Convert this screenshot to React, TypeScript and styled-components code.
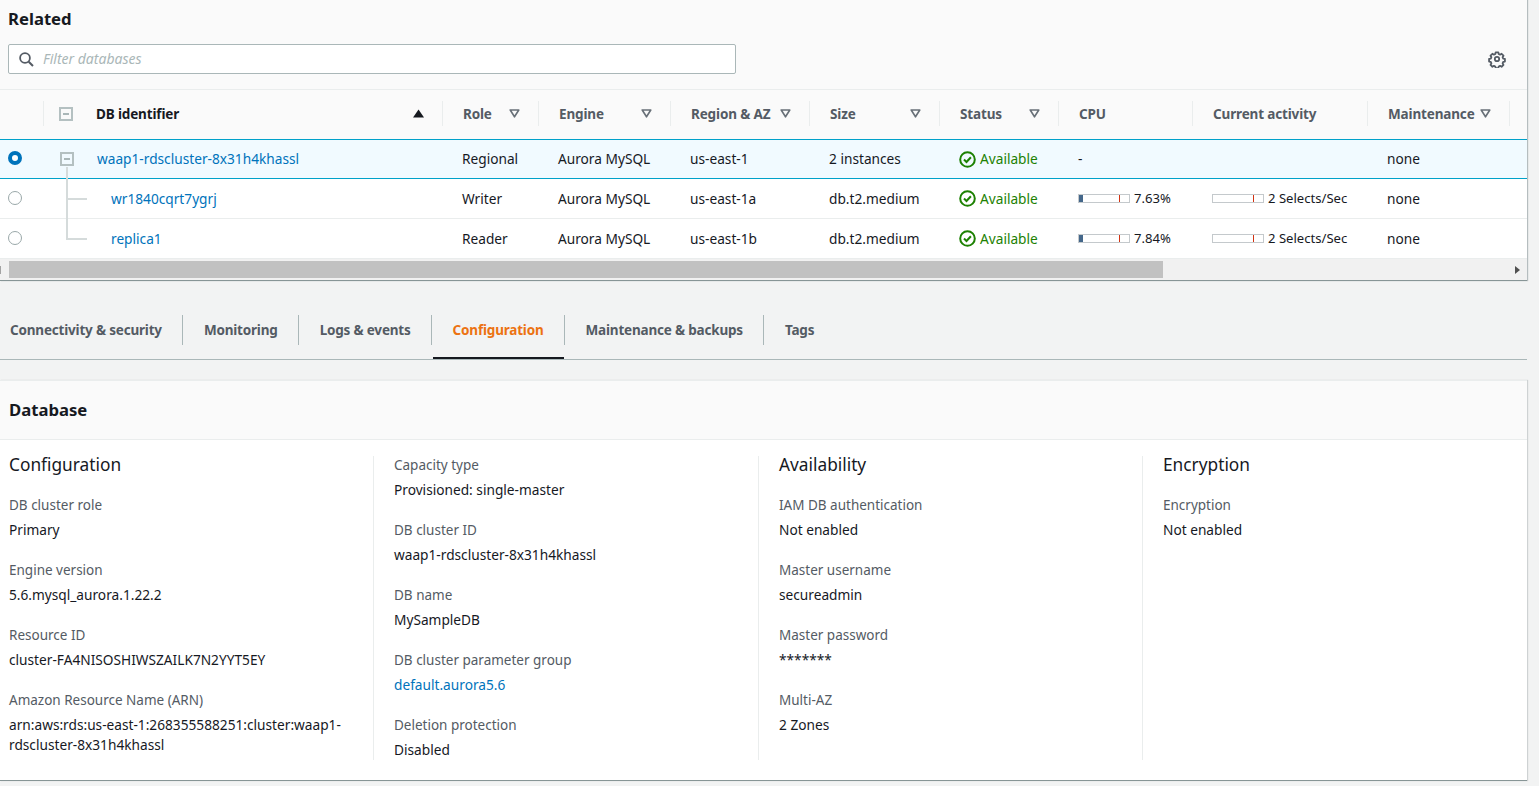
import React from "react";
import styled, { createGlobalStyle } from "styled-components";

const Global = createGlobalStyle`
  html, body { margin: 0; padding: 0; background: #f2f3f3; overflow: hidden; }
  * { box-sizing: border-box; }
  body { font-family: "Noto Sans", "Open Sans", sans-serif; font-size: 13.7px; line-height: 20px; color: #16191f; }
`;

const COLS = "43px 399px 96px 132px 139px 130px 119px 134px 175px 142px 18px";

const Page = styled.div`
  width: 1539px;
  height: 786px;
  overflow: hidden;
  background: #f2f3f3;
`;
const Column = styled.div`
  width: 1527px;
`;
const TopPanel = styled.section`
  background: #fff;
  height: 281px;
  border-bottom: 1px solid #879596;
  box-shadow: 1px 0 1px 0 rgba(0, 28, 36, 0.25);
`;
const PanelHead = styled.div`
  height: 90px;
  background: #fafafa;
  padding: 8px 8px 0;
  border-bottom: 1px solid #eaeded;
`;
const Title = styled.h2`
  margin: 0;
  font-size: 16.7px;
  line-height: 22px;
  font-weight: 700;
  color: #16191f;
`;
const FilterRow = styled.div`
  display: flex;
  align-items: center;
  justify-content: space-between;
  margin-top: 14px;
  padding-right: 13px;
`;
const SearchBox = styled.div`
  width: 728px;
  height: 30px;
  background: #fff;
  border: 1px solid #aab7b8;
  border-radius: 2px;
  display: flex;
  align-items: center;
  padding-left: 10px;
  gap: 9px;
  font-size: 14px;
  color: #aab7b8;
  font-style: italic;
`;
const GridRow = styled.div<{ $h: number; $bg: string }>`
  display: grid;
  grid-template-columns: ${COLS};
  height: ${(p) => p.$h}px;
  background: ${(p) => p.$bg};
  align-items: center;
`;
const HeadRow = styled(GridRow)`
  padding-bottom: 2px;
`;
const HeadCell = styled.div<{ $dark?: boolean; $sep?: boolean }>`
  height: 25px;
  display: flex;
  align-items: center;
  justify-content: space-between;
  padding: 0 18px 0 20px;
  font-weight: 700;
  font-size: 13.5px;
  letter-spacing: -0.15px;
  color: ${(p) => (p.$dark ? "#16191f" : "#545b64")};
  border-left: ${(p) => (p.$sep === false ? "0" : "1px solid #eaeded")};
`;
const IdHead = styled(HeadCell)`
  padding: 0 18px 0 15px;
`;
const IdLabel = styled.span`
  display: flex;
  align-items: center;
  gap: 23px;
`;
const DataRow = styled(GridRow)<{ $selected?: boolean }>`
  border-top: ${(p) => (p.$selected ? "1px solid #00a1c9" : "0")};
  border-bottom: 1px solid ${(p) => (p.$selected ? "#00a1c9" : "#eaeded")};
`;
const RadioCell = styled.div`
  display: flex;
  justify-content: center;
  padding-right: 13px;
  margin-top: -2px;
`;
const Radio = styled.span<{ $on?: boolean }>`
  width: 14px;
  height: 14px;
  border-radius: 50%;
  background: #fff;
  border: ${(p) => (p.$on ? "4px solid #0073bb" : "1px solid #9aa8a9")};
`;
const IdCell = styled.div<{ $child?: boolean }>`
  position: relative;
  display: flex;
  align-items: center;
  height: 100%;
  padding-left: ${(p) => (p.$child ? "68px" : "17px")};
`;
const Expand = styled.span<{ $row?: boolean }>`
  width: 14px;
  height: 14px;
  border: 2px solid #b4c0c1;
  display: flex;
  align-items: center;
  justify-content: center;
  margin-right: ${(p) => (p.$row ? "23px" : "0")};
  background: transparent;
  &::after {
    content: "";
    width: 6px;
    height: 2px;
    background: #aab7b8;
  }
`;
const TreeV = styled.span<{ $h: number; $top: number }>`
  position: absolute;
  left: 23px;
  top: ${(p) => p.$top}px;
  width: 2px;
  height: ${(p) => p.$h}px;
  background: #d5dbdb;
`;
const TreeH = styled.span`
  position: absolute;
  left: 23px;
  top: 19px;
  width: 21px;
  height: 2px;
  background: #d5dbdb;
`;
const Link = styled.a`
  color: #0073bb;
  text-decoration: none;
`;
const Cell = styled.div`
  padding-left: 20px;
  display: flex;
  align-items: center;
  white-space: nowrap;
  color: #16191f;
`;
const Available = styled.span`
  display: flex;
  align-items: center;
  gap: 4px;
  color: #1d8102;
`;
const Meter = styled.span`
  display: flex;
  align-items: center;
  gap: 4px;
  font-size: 13.1px;
  margin-top: -1px;
`;
const MeterBar = styled.span`
  position: relative;
  display: block;
  width: 52px;
  height: 9px;
  border: 1px solid #c4c9cc;
  background: #fff;
`;
const MeterFill = styled.span`
  display: block;
  height: 100%;
  background: #44678a;
`;
const MeterTick = styled.span`
  position: absolute;
  right: 9px;
  top: 0;
  bottom: 0;
  width: 1px;
  background: #d13212;
`;
const Scrollbar = styled.div`
  height: 21px;
  background: #f1f1f1;
  display: flex;
  align-items: center;
  padding: 0 7px 0 0;
`;
const ScrollEnd = styled.span`
  width: 0;
  height: 0;
  border-top: 4px solid transparent;
  border-bottom: 4px solid transparent;
  border-left: 5px solid #505050;
  margin-left: auto;
`;
const ScrollStart = styled.span`
  width: 1px;
  height: 8px;
  background: #a3a3a3;
  margin-right: 8px;
`;
const ScrollThumb = styled.span`
  width: 1154px;
  height: 17px;
  background: #c1c1c1;
`;
const Tabs = styled.nav`
  margin-top: 34px;
  height: 45px;
  border-bottom: 1px solid #aab7b8;
  display: flex;
  align-items: flex-start;
`;
const Tab = styled.div<{ $active?: boolean; $first?: boolean; $last?: boolean }>`
  position: relative;
  height: 30px;
  display: flex;
  align-items: center;
  padding: 0 20px 0 ${(p) => (p.$first ? "10px" : "21px")};
  font-weight: 700;
  font-size: 13.5px;
  letter-spacing: -0.19px;
  color: ${(p) => (p.$active ? "#ec7211" : "#545b64")};
  border-right: ${(p) => (p.$last ? "0" : "1px solid #aab7b8")};
  &::after {
    content: "";
    display: ${(p) => (p.$active ? "block" : "none")};
    position: absolute;
    left: 1px;
    right: 0;
    top: 42px;
    height: 2px;
    background: #16191f;
  }
`;
const Card = styled.section`
  margin-top: 20px;
  height: 401px;
  background: #fff;
  border-bottom: 1px solid #879596;
  box-shadow: 1px 0 1px 0 rgba(0, 28, 36, 0.15);
`;
const CardHead = styled.div`
  height: 60px;
  background: #fafafa;
  border-bottom: 1px solid #eaeded;
  padding: 18px 9px 0;
  border-top: 1px solid #eaeded;
`;
const CardBody = styled.div`
  display: grid;
  grid-template-columns: 374px 385px 384px 384px;
  padding-top: 16px;
`;
const DetailCol = styled.div<{ $first?: boolean; $last?: boolean }>`
  height: 304px;
  padding-top: 0;
  padding-left: ${(p) => (p.$first ? "9px" : "20px")};
  padding-right: 10px;
  border-right: ${(p) => (p.$last ? "0" : "1px solid #eaeded")};
`;
const ColStack = styled.div`
  margin-top: -1px;
`;
const ColTitle = styled.h3`
  margin: 0 0 20px;
  font-size: 17.3px;
  line-height: 20px;
  font-weight: 400;
  color: #16191f;
`;
const Field = styled.div`
  margin-bottom: 20px;
`;
const Label = styled.div`
  font-size: 13.5px;
  color: #545b64;
  line-height: 20px;
  margin-bottom: 5px;
`;
const Value = styled.div`
  line-height: 20px;
`;

const Caret = () => (
  <svg width="11" height="9" viewBox="0 0 11 9" aria-hidden="true">
    <path d="M1.2 1h8.6L5.5 7.8z" fill="none" stroke="#687078" strokeWidth="1.6" strokeLinejoin="round" />
  </svg>
);
const SortUp = () => (
  <svg width="11" height="9" viewBox="0 0 11 9" aria-hidden="true">
    <path d="M5.5 0.5L11 8.5H0z" fill="#16191f" />
  </svg>
);
const SearchIcon = () => (
  <svg width="15" height="15" viewBox="0 0 15 15" fill="none" aria-hidden="true">
    <circle cx="6" cy="6" r="4.9" stroke="#545b64" strokeWidth="1.8" />
    <path d="M9.7 9.7L14 14" stroke="#545b64" strokeWidth="2" />
  </svg>
);
const Gear = () => (
  <svg width="18" height="18" viewBox="0 0 18 18" fill="none" aria-hidden="true">
    <path
      d="M7.5 1.6h3l.4 1.9 1.5.7 1.7-1 2.1 2.1-1 1.7.7 1.5 1.9.4v3l-1.9.4-.7 1.5 1 1.7-2.1 2.1-1.7-1-1.5.7-.4 1.9h-3l-.4-1.9-1.5-.7-1.7 1-2.1-2.1 1-1.7-.7-1.5-1.9-.4v-3l1.9-.4.7-1.5-1-1.7 2.1-2.1 1.7 1 1.5-.7z"
      transform="translate(0.9 0.9) scale(0.9)"
      stroke="#545b64"
      strokeWidth="2"
      strokeLinejoin="round"
    />
    <circle cx="9" cy="9" r="2.2" stroke="#545b64" strokeWidth="1.8" />
  </svg>
);
const CheckCircle = () => (
  <svg width="17" height="17" viewBox="0 0 17 17" fill="none" aria-hidden="true">
    <circle cx="8.5" cy="8.5" r="7.3" stroke="#1d8102" strokeWidth="2" />
    <path d="M5 8.5l2.5 2.5 4.4-4.8" stroke="#1d8102" strokeWidth="2" />
  </svg>
);

const Usage = ({ fill, text }: { fill: number; text: string }) => (
  <Meter>
    <MeterBar>
      <MeterFill style={{ width: `${fill}%` }} />
      <MeterTick />
    </MeterBar>
    {text}
  </Meter>
);

const headers: [string, boolean][] = [
  ["Role", true],
  ["Engine", true],
  ["Region & AZ", true],
  ["Size", true],
  ["Status", true],
  ["CPU", false],
  ["Current activity", false],
  ["Maintenance", true],
];

type RowData = {
  id: string;
  role: string;
  region: string;
  size: string;
  cpu?: string;
  selected?: boolean;
  tree?: "first" | "last";
};
const rows: RowData[] = [
  { id: "waap1-rdscluster-8x31h4khassl", role: "Regional", region: "us-east-1", size: "2 instances", selected: true },
  { id: "wr1840cqrt7ygrj", role: "Writer", region: "us-east-1a", size: "db.t2.medium", cpu: "7.63%", tree: "first" },
  { id: "replica1", role: "Reader", region: "us-east-1b", size: "db.t2.medium", cpu: "7.84%", tree: "last" },
];

const tabs = ["Connectivity & security", "Monitoring", "Logs & events", "Configuration", "Maintenance & backups", "Tags"];

type F = { label: string; value: string; link?: boolean };
const details: { title?: string; fields: F[] }[] = [
  {
    title: "Configuration",
    fields: [
      { label: "DB cluster role", value: "Primary" },
      { label: "Engine version", value: "5.6.mysql_aurora.1.22.2" },
      { label: "Resource ID", value: "cluster-FA4NISOSHIWSZAILK7N2YYT5EY" },
      { label: "Amazon Resource Name (ARN)", value: "arn:aws:rds:us-east-1:268355588251:cluster:waap1-rdscluster-8x31h4khassl" },
    ],
  },
  {
    fields: [
      { label: "Capacity type", value: "Provisioned: single-master" },
      { label: "DB cluster ID", value: "waap1-rdscluster-8x31h4khassl" },
      { label: "DB name", value: "MySampleDB" },
      { label: "DB cluster parameter group", value: "default.aurora5.6", link: true },
      { label: "Deletion protection", value: "Disabled" },
    ],
  },
  {
    title: "Availability",
    fields: [
      { label: "IAM DB authentication", value: "Not enabled" },
      { label: "Master username", value: "secureadmin" },
      { label: "Master password", value: "*******" },
      { label: "Multi-AZ", value: "2 Zones" },
    ],
  },
  {
    title: "Encryption",
    fields: [{ label: "Encryption", value: "Not enabled" }],
  },
];

export default function App() {
  return (
    <Page>
      <Global />
      <Column>
        <TopPanel>
          <PanelHead>
            <Title>Related</Title>
            <FilterRow>
              <SearchBox>
                <SearchIcon />
                Filter databases
              </SearchBox>
              <Gear />
            </FilterRow>
          </PanelHead>
          <HeadRow $h={49} $bg="#fafafa">
            <HeadCell $sep={false} />
            <IdHead $dark>
              <IdLabel>
                <Expand />
                DB identifier
              </IdLabel>
              <SortUp />
            </IdHead>
            {headers.map(([h, c]) => (
              <HeadCell key={h}>
                {h}
                {c && <Caret />}
              </HeadCell>
            ))}
            <HeadCell />
          </HeadRow>
          {rows.map((r) => (
            <DataRow key={r.id} $h={40} $bg={r.selected ? "#f1faff" : "#fff"} $selected={r.selected}>
              <RadioCell>
                <Radio $on={r.selected} />
              </RadioCell>
              <IdCell $child={!!r.tree}>
                {r.selected && <Expand $row />}
                {r.selected && <TreeV $top={27} $h={12} />}
                {r.tree && <TreeV $top={0} $h={r.tree === "first" ? 40 : 21} />}
                {r.tree && <TreeH />}
                <Link>{r.id}</Link>
              </IdCell>
              <Cell>{r.role}</Cell>
              <Cell>Aurora MySQL</Cell>
              <Cell>{r.region}</Cell>
              <Cell>{r.size}</Cell>
              <Cell>
                <Available>
                  <CheckCircle />
                  Available
                </Available>
              </Cell>
              <Cell>{r.cpu ? <Usage fill={8} text={r.cpu} /> : "-"}</Cell>
              <Cell>{r.cpu ? <Usage fill={0} text="2 Selects/Sec" /> : null}</Cell>
              <Cell>none</Cell>
              <Cell />
            </DataRow>
          ))}
          <Scrollbar>
            <ScrollStart />
            <ScrollThumb />
            <ScrollEnd />
          </Scrollbar>
        </TopPanel>
        <Tabs>
          {tabs.map((t, i) => (
            <Tab key={t} $first={i === 0} $last={i === tabs.length - 1} $active={t === "Configuration"}>
              {t}
            </Tab>
          ))}
        </Tabs>
        <Card>
          <CardHead>
            <Title>Database</Title>
          </CardHead>
          <CardBody>
            {details.map((c, i) => (
              <DetailCol key={i} $first={i === 0} $last={i === details.length - 1}>
                <ColStack>
                  {c.title && <ColTitle>{c.title}</ColTitle>}
                  {c.fields.map((f) => (
                    <Field key={f.label}>
                      <Label>{f.label}</Label>
                      <Value>{f.link ? <Link>{f.value}</Link> : f.value}</Value>
                    </Field>
                  ))}
                </ColStack>
              </DetailCol>
            ))}
          </CardBody>
        </Card>
      </Column>
    </Page>
  );
}
